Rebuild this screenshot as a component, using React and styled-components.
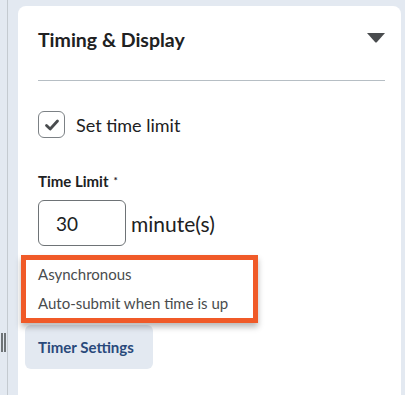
import React from 'react';
import styled, { createGlobalStyle } from 'styled-components';

const GlobalStyle = createGlobalStyle`
  html, body {
    margin: 0;
    padding: 0;
    background: #e3e9f1;
    font-family: Lato, "Noto Sans", sans-serif;
    overflow: hidden;
  }
`;

const Page = styled.div`
  display: flex;
  height: 395px;
`;

const Rail = styled.div`
  flex: 0 0 18px;
  display: flex;
`;

const Handle = styled.div`
  width: 8px;
  border-right: 1px solid #c4cad0;
  display: flex;
  gap: 1px;
  padding: 333px 0 0 1px;
  box-sizing: border-box;
`;

const GripBar = styled.span`
  width: 2px;
  height: 19px;
  background: #6e7376;
`;

const Card = styled.section`
  flex: 0 0 383px;
  margin-top: 6px;
  background: #ffffff;
  border-radius: 8px 8px 0 0;
  padding: 0 16px 0 20px;
  box-sizing: border-box;
`;

const Header = styled.div`
  display: flex;
  justify-content: space-between;
  align-items: flex-start;
  padding: 22px 0 28px;
  border-bottom: 1px solid #b6bec4;
`;

const Title = styled.h2`
  margin: 0;
  font-size: 19.5px;
  line-height: 24px;
  font-weight: 700;
  color: #202122;
`;

const Caret = styled.svg`
  margin-top: 5px;
  display: block;
`;

const CheckRow = styled.label`
  display: flex;
  align-items: center;
  gap: 11px;
  margin-top: 30px;
  height: 27px;
  font-size: 18px;
  color: #202122;
`;

const Box = styled.span`
  width: 27px;
  height: 27px;
  box-sizing: border-box;
  border: 1.5px solid #7c8185;
  border-radius: 6px;
  display: flex;
  align-items: center;
  justify-content: center;
`;

const FieldLabel = styled.div`
  margin-top: 33px;
  font-size: 15px;
  line-height: 18px;
  font-weight: 700;
  color: #202122;
`;

const Required = styled.span`
  font-size: 10px;
  vertical-align: 3px;
  margin-left: 5px;
`;

const InputRow = styled.div`
  display: flex;
  align-items: center;
  gap: 5px;
  margin-top: 10px;
`;

const NumberBox = styled.div`
  width: 88px;
  height: 46px;
  box-sizing: border-box;
  border: 1px solid #6e7376;
  border-radius: 6px;
  padding-left: 17px;
  display: flex;
  align-items: center;
  font-size: 19px;
  color: #202122;
`;

const Unit = styled.span`
  font-size: 21px;
  color: #202122;
`;

const Details = styled.div`
  position: relative;
  margin-top: 14px;
`;

const DetailLine = styled.div`
  font-size: 15px;
  line-height: 29px;
  color: #494c4e;
`;

const Highlight = styled.div`
  position: absolute;
  left: -17px;
  top: -5px;
  width: 237px;
  height: 68px;
  box-sizing: border-box;
  border: 5px solid #f05a28;
  box-shadow: 0 4px 6px rgba(0, 0, 0, 0.28);
  pointer-events: none;
  z-index: 2;
`;

const TimerButton = styled.button`
  margin: 7px 0 0 -13px;
  width: 128px;
  height: 44px;
  border: none;
  border-radius: 6px;
  background: #e3e9f1;
  color: #29497b;
  font-family: inherit;
  font-size: 15px;
  font-weight: 700;
  text-align: left;
  padding: 0 13px;
  cursor: pointer;
`;

export default function App() {
  return (
    <Page>
      <GlobalStyle />
      <Rail>
        <Handle>
          <GripBar />
          <GripBar />
        </Handle>
      </Rail>
      <Card>
        <Header>
          <Title>Timing &amp; Display</Title>
          <Caret width="18" height="10" viewBox="0 0 18 10">
            <path d="M0 0 H18 L10 9 Q9 10 8 9 Z" fill="#494c4e" />
          </Caret>
        </Header>

        <CheckRow>
          <Box>
            <svg width="18" height="18" viewBox="0 0 18 18">
              <path d="M3.5 9.5 L7.2 13 L14.5 5" fill="none" stroke="#494c4e" strokeWidth="2.8" strokeLinecap="round" strokeLinejoin="round" />
            </svg>
          </Box>
          Set time limit
        </CheckRow>

        <FieldLabel>
          Time Limit<Required>*</Required>
        </FieldLabel>
        <InputRow>
          <NumberBox>30</NumberBox>
          <Unit>minute(s)</Unit>
        </InputRow>

        <Details>
          <DetailLine>Asynchronous</DetailLine>
          <DetailLine>Auto-submit when time is up</DetailLine>
          <Highlight />
        </Details>

        <TimerButton>Timer Settings</TimerButton>
      </Card>
    </Page>
  );
}
